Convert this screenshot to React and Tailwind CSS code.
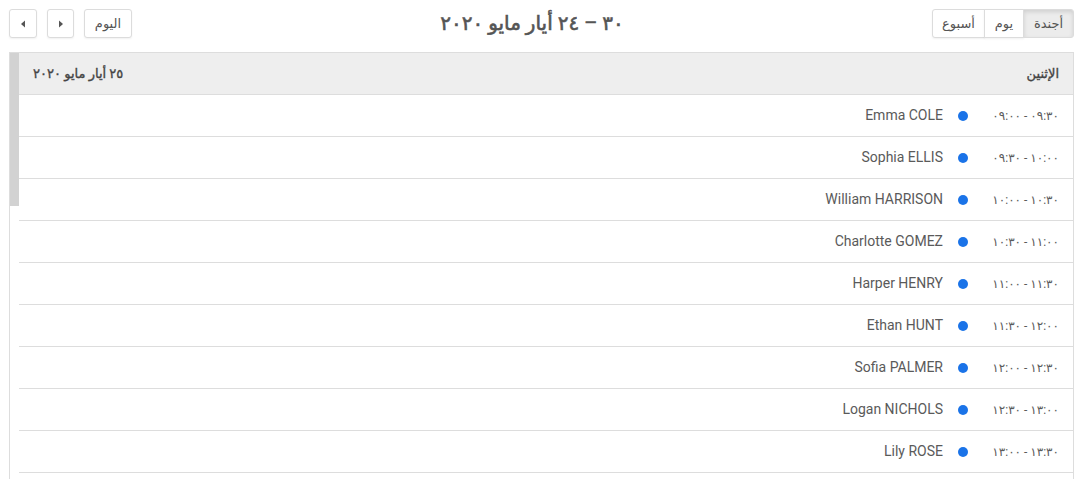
import React from "react";

const events = [
  ["٠٩:٠٠", "٠٩:٣٠", "Emma COLE"],
  ["٠٩:٣٠", "١٠:٠٠", "Sophia ELLIS"],
  ["١٠:٠٠", "١٠:٣٠", "William HARRISON"],
  ["١٠:٣٠", "١١:٠٠", "Charlotte GOMEZ"],
  ["١١:٠٠", "١١:٣٠", "Harper HENRY"],
  ["١١:٣٠", "١٢:٠٠", "Ethan HUNT"],
  ["١٢:٠٠", "١٢:٣٠", "Sofia PALMER"],
  ["١٢:٣٠", "١٣:٠٠", "Logan NICHOLS"],
  ["١٣:٠٠", "١٣:٣٠", "Lily ROSE"],
];

function Btn({ children, className = "" }) {
  return (
    <button
      className={
        "h-[29px] border border-[#dcdcdc] text-[13px] text-[#555] flex items-center justify-center shadow-[0_1px_2px_rgba(0,0,0,0.06)] " +
        className
      }
    >
      {children}
    </button>
  );
}

export default function App() {
  return (
    <div
      className="bg-white px-[9px] pt-[9px] h-[479px] overflow-hidden"
      style={{ fontFamily: 'Roboto, "DejaVu Sans", sans-serif' }}
    >
      {/* toolbar */}
      <div className="flex justify-between items-center h-[29px] mb-[14px]">
        <div className="flex gap-[10px]">
          <Btn className="w-[28px] rounded-[3px] bg-white">
            <svg width="6" height="8" viewBox="0 0 6 8">
              <path d="M5 0.5 L1 4 L5 7.5 Z" fill="#555" />
            </svg>
          </Btn>
          <Btn className="w-[27px] rounded-[3px] bg-white">
            <svg width="6" height="8" viewBox="0 0 6 8">
              <path d="M1 0.5 L5 4 L1 7.5 Z" fill="#555" />
            </svg>
          </Btn>
          <Btn className="w-[48px] rounded-[3px] bg-white">
            <span dir="rtl">اليوم</span>
          </Btn>
        </div>
        <h2
          dir="rtl"
          className="text-[20px] leading-[29px] text-[#555] font-normal [-webkit-text-stroke:0.6px_#555]"
        >
          <bdi dir="ltr">٣٠</bdi> – <bdi dir="ltr">٢٤</bdi> أيار مايو ٢٠٢٠
        </h2>
        <div className="flex">
          <Btn className="w-[53px] rounded-l-[3px] bg-white">
            <span dir="rtl">أسبوع</span>
          </Btn>
          <Btn className="w-[40px] -ml-px bg-white">
            <span dir="rtl">يوم</span>
          </Btn>
          <Btn className="w-[51px] -ml-px rounded-r-[3px] bg-[#ececec] shadow-[inset_0_2px_4px_rgba(0,0,0,0.12)]">
            <span dir="rtl">أجندة</span>
          </Btn>
        </div>
      </div>

      {/* list */}
      <div className="border-t border-x border-[#dddddd] flex">
        <div className="w-[9px] shrink-0">
          <div className="h-[153px] bg-[#d2d2d2]" />
        </div>
        <div dir="rtl" className="flex-1 flex flex-col">
          <div className="h-[42px] bg-[#eeeeee] border-b border-[#dddddd] flex items-center justify-between px-[14px] text-[13px] text-[#444] [-webkit-text-stroke:0.35px_#444]">
            <span>الإثنين</span>
            <span>٢٥ أيار مايو ٢٠٢٠</span>
          </div>
          {events.map(([s, e, name]) => (
            <div
              key={name}
              className="h-[42px] border-b border-[#dddddd] flex items-center text-[14px] text-[#5a5a5a]"
            >
              <div className="w-[100px] shrink-0 pr-[14px] text-right text-[12px] tracking-[-0.3px]">
                <span dir="ltr">
                  <bdi dir="ltr">{s}</bdi> - <bdi dir="ltr">{e}</bdi>
                </span>
              </div>
              <div className="w-[20px] shrink-0 flex justify-center">
                <span className="w-[10px] h-[10px] rounded-full bg-[#1a73e8]" />
              </div>
              <div className="mr-[10px]">{name}</div>
            </div>
          ))}
          <div className="h-[42px] border-b border-[#dddddd]" />
        </div>
      </div>
    </div>
  );
}
